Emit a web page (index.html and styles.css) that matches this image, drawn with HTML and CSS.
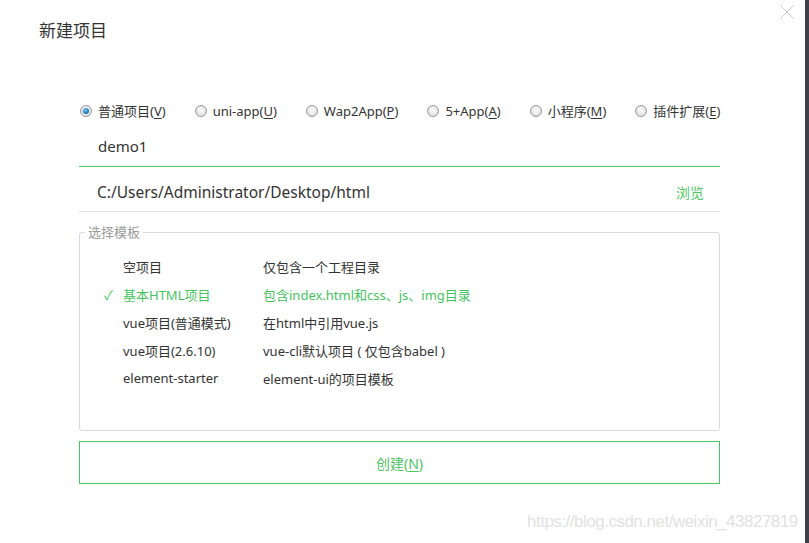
FILE: index.html
```html
<!DOCTYPE html>
<html lang="zh-CN">
<head>
<meta charset="utf-8">
<title>新建项目</title>
<link rel="stylesheet" href="styles.css">
</head>
<body>
<div class="screen">
  <div class="dialog">
    <h1 class="title">新建项目</h1>
    <svg class="close" width="14" height="14" viewBox="0 0 14 14"><path d="M0.5 0.5L13.5 13.5M13.5 0.5L0.5 13.5" stroke="#c9c9c9" stroke-width="1" fill="none"/></svg>
    <div class="content">
      <div class="radios">
        <label class="radio"><span class="dot checked"></span>普通项目(<u>V</u>)</label>
        <label class="radio"><span class="dot"></span>uni-app(<u>U</u>)</label>
        <label class="radio"><span class="dot"></span>Wap2App(<u>P</u>)</label>
        <label class="radio"><span class="dot"></span>5+App(<u>A</u>)</label>
        <label class="radio"><span class="dot"></span>小程序(<u>M</u>)</label>
        <label class="radio"><span class="dot"></span>插件扩展(<u>E</u>)</label>
      </div>
      <div class="field name">demo1</div>
      <div class="field path"><span>C:/Users/Administrator/Desktop/html</span><span class="browse">浏览</span></div>
      <fieldset class="templates">
        <legend>选择模板</legend>
        <div class="row"><span class="check"></span><span class="c1">空项目</span><span class="c2">仅包含一个工程目录</span></div>
        <div class="row active"><span class="check">✓</span><span class="c1">基本HTML项目</span><span class="c2">包含index.html和css、js、img目录</span></div>
        <div class="row"><span class="check"></span><span class="c1">vue项目(普通模式)</span><span class="c2">在html中引用vue.js</span></div>
        <div class="row"><span class="check"></span><span class="c1">vue项目(2.6.10)</span><span class="c2">vue-cli默认项目 ( 仅包含babel )</span></div>
        <div class="row"><span class="check"></span><span class="c1">element-starter</span><span class="c2">element-ui的项目模板</span></div>
      </fieldset>
      <button class="create">创建(<u>N</u>)</button>
    </div>
    <div class="watermark">https://blog.csdn.net/weixin_43827819</div>
  </div>
  <div class="edge"></div>
</div>
</body>
</html>
```
FILE: styles.css
```css
* { box-sizing: border-box; }
html, body { margin: 0; padding: 0; background: #fff; }
body {
  font-family: "Noto Sans", "Noto Sans CJK SC", sans-serif;
  color: #333;
  width: 809px;
  height: 543px;
  overflow: hidden;
}
.screen { display: flex; height: 543px; }
.dialog { position: relative; width: 805px; height: 543px; }
.edge { width: 4px; height: 543px; background: #3d4047; }
.title {
  margin: 0;
  padding: 19px 0 0 39px;
  font-size: 17px;
  font-weight: normal;
  line-height: 24px;
  color: #333;
}
.close { position: absolute; left: 780px; top: 5px; }
.content { margin: 0 0 0 79px; width: 641px; }
.radios {
  display: flex;
  align-items: center;
  gap: 28px;
  margin-top: 58px;
  height: 20px;
  font-size: 13px;
  line-height: 20px;
}
.radio { display: flex; align-items: center; white-space: nowrap; }
.radio u { text-decoration: underline; text-underline-offset: 2px; }
.dot {
  width: 12px; height: 12px;
  margin: 0 6px 0 1px;
  border-radius: 50%;
  border: 1px solid #9a9a9a;
  background: radial-gradient(circle at 50% 40%, #fdfdfd 0%, #e6e6e6 60%, #cfcfcf 100%);
  position: relative;
}
.dot.checked::after {
  content: "";
  position: absolute;
  left: 2px; top: 2px;
  width: 6px; height: 6px;
  border-radius: 50%;
  background: radial-gradient(circle at 40% 35%, #7ec8f4 0%, #1f7fc6 55%, #114d86 100%);
}
.field {
  display: flex;
  align-items: center;
  justify-content: space-between;
  font-size: 15px;
}
.name {
  margin-top: 7px;
  height: 39px;
  padding: 0 0 2px 19px;
  border-bottom: 1px solid #4cc45f;
}
.path {
  height: 45px;
  padding: 5px 16px 0 18px;
  border-bottom: 1px solid #e3e3e3;
  font-size: 15.5px;
}
.browse { color: #4fc866; font-size: 14px; }
.templates {
  margin: 11px 0 0 0;
  padding: 11px 0 0 0;
  height: 208px;
  border: 1px solid #d5dce3;
  border-radius: 3px;
  font-size: 13px;
}
.templates legend {
  margin-left: 5px;
  padding: 0 3px 0 3px;
  color: #9a9a9a;
  font-size: 13px;
  line-height: 18px;
}
.row { display: flex; align-items: center; height: 28px; }
.row .check { width: 43px; padding-left: 24px; font-size: 13px; }
.row .c1 { width: 140px; }
.row.active { color: #45c45e; }
.create {
  display: block;
  width: 641px;
  height: 43px;
  margin-top: 10px;
  background: #fff;
  border: 1px solid #4cc45f;
  color: #4cc45f;
  font-family: "Noto Sans", "Noto Sans CJK SC", sans-serif;
  font-size: 14px;
  padding: 0;
}
.create u { text-underline-offset: 2px; }
.watermark {
  position: absolute;
  left: 527px;
  top: 512px;
  font-family: "Liberation Sans", sans-serif;
  font-size: 17px;
  letter-spacing: -0.5px;
  color: #e2e2e2;
  white-space: nowrap;
}
```
